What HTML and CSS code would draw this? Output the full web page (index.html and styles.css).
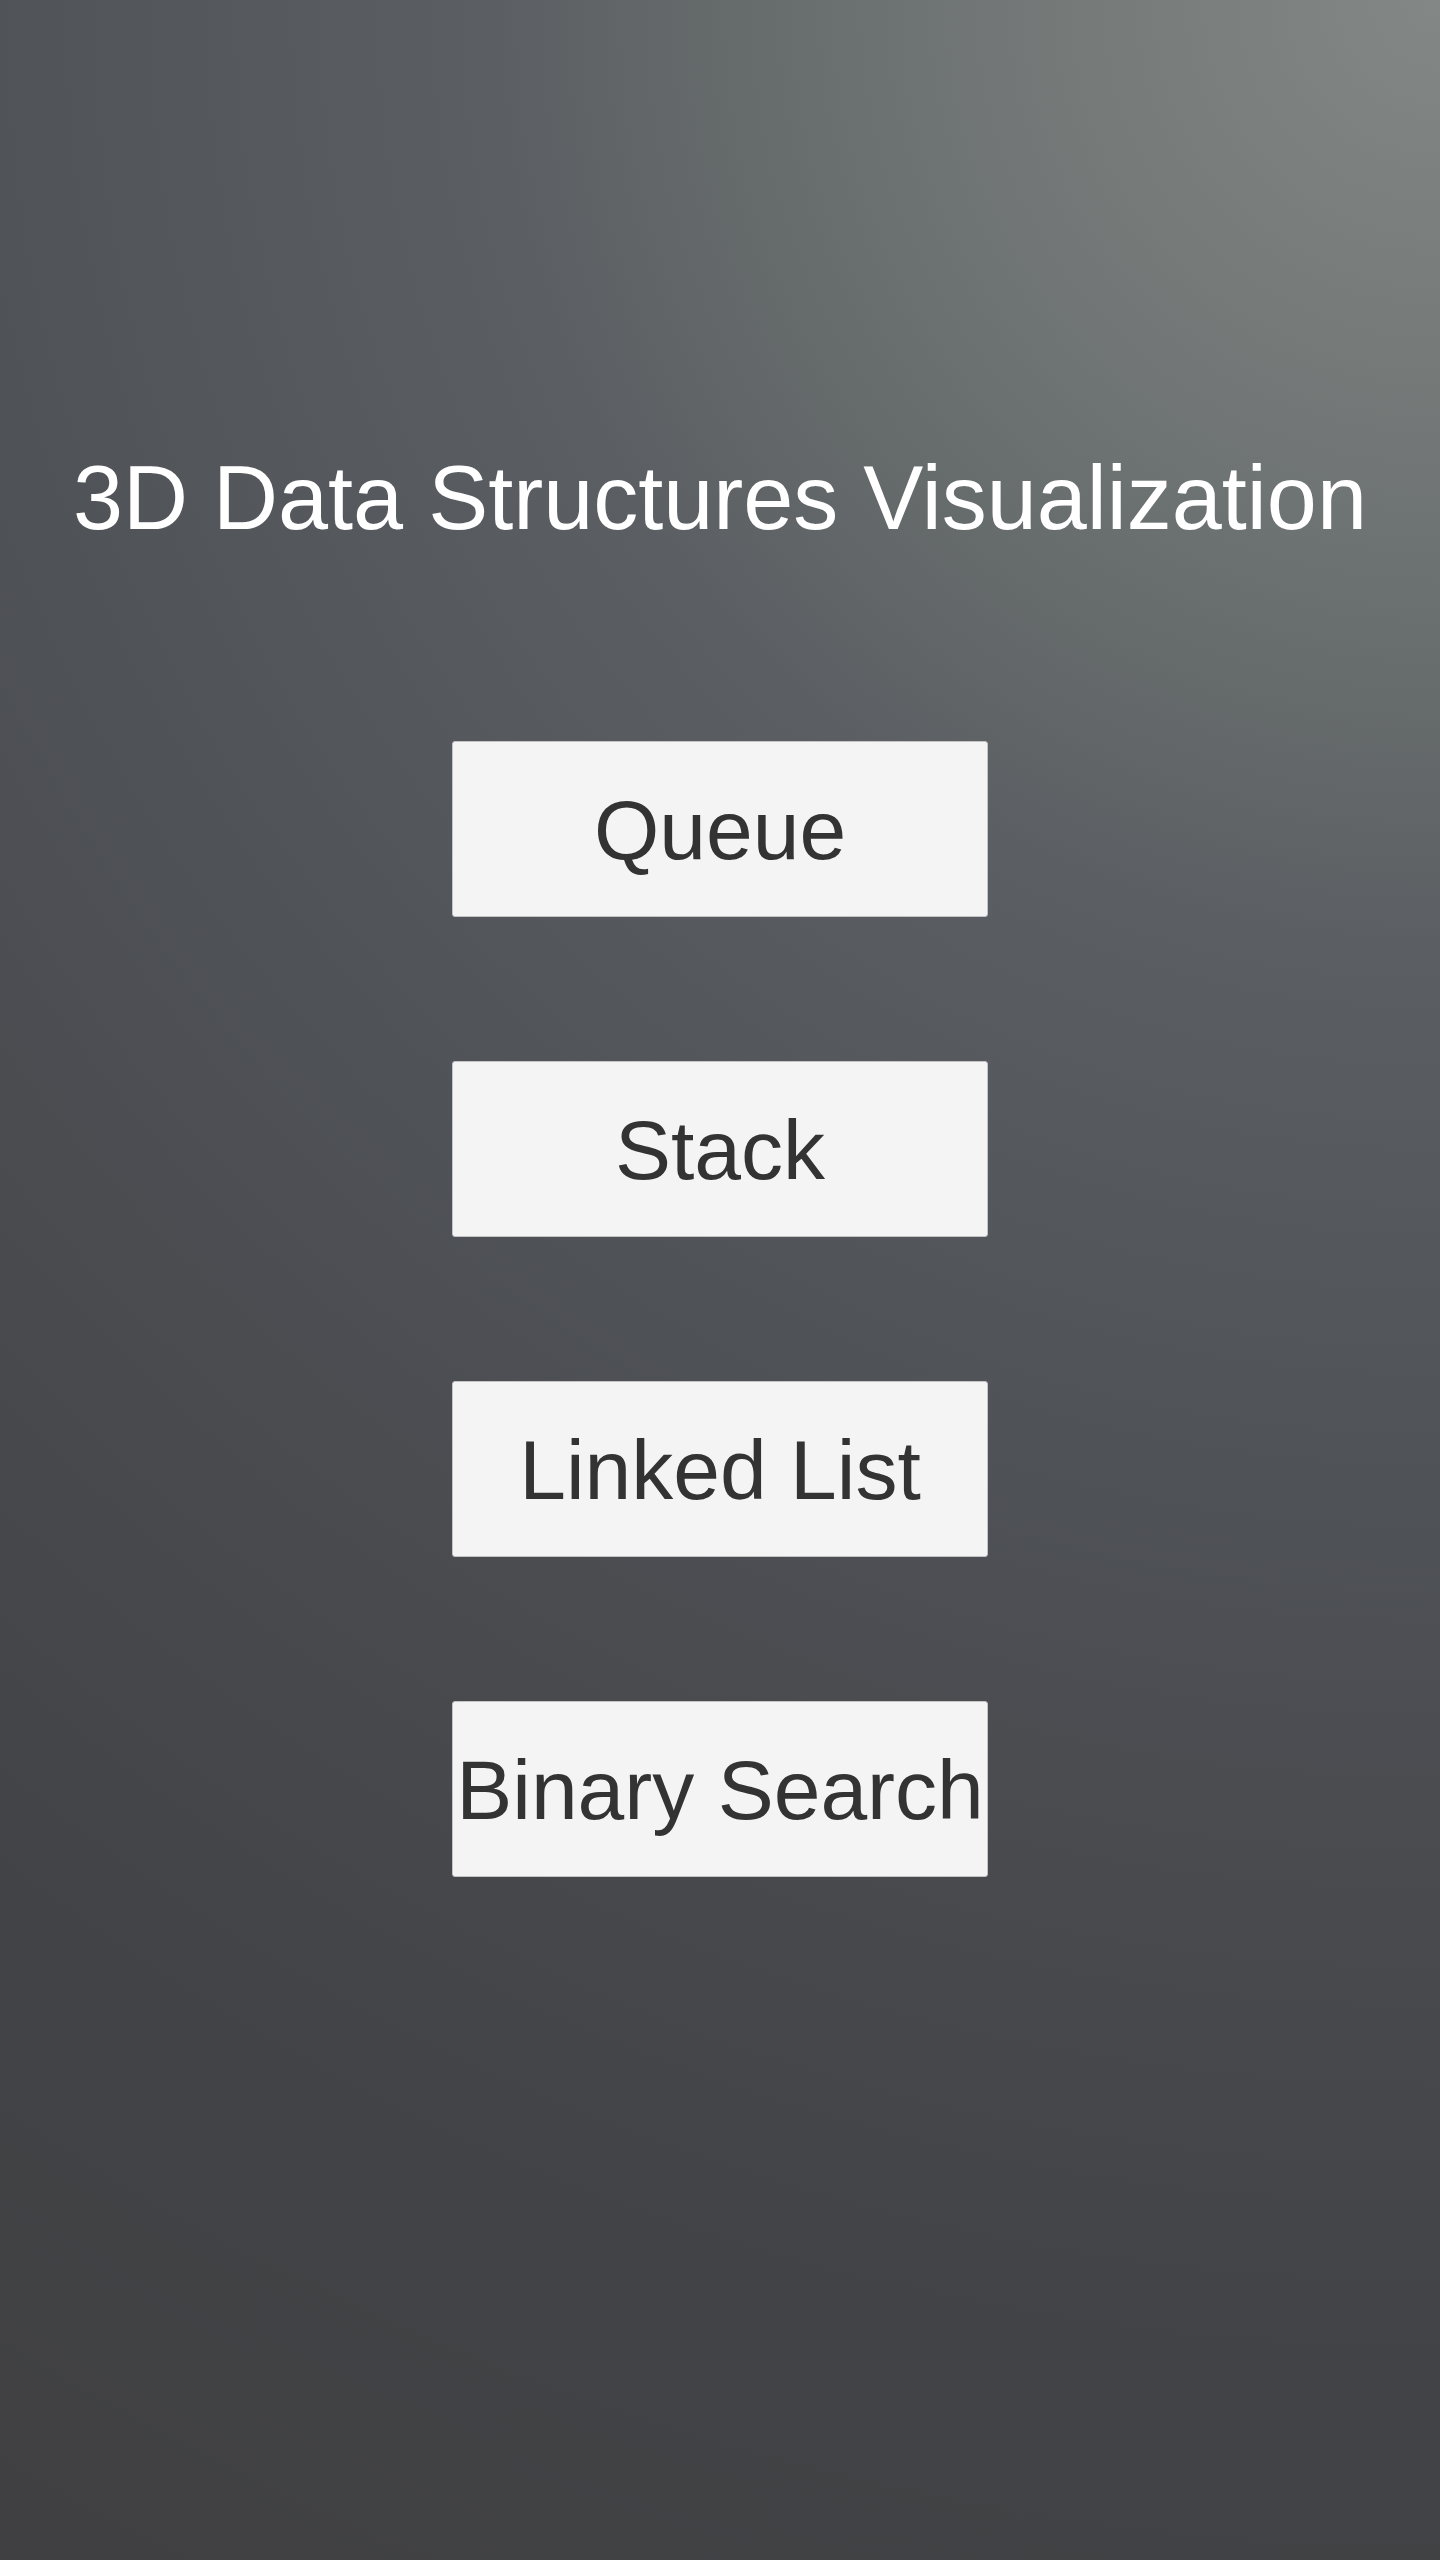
FILE: index.html
```html
<!DOCTYPE html>
<html lang="en">
<head>
<meta charset="utf-8">
<title>3D Data Structures Visualization</title>
<link rel="stylesheet" href="styles.css">
</head>
<body>
  <main class="menu">
    <h1 class="menu-title">3D Data Structures Visualization</h1>
    <nav class="menu-buttons">
      <button class="menu-btn">Queue</button>
      <button class="menu-btn">Stack</button>
      <button class="menu-btn">Linked List</button>
      <button class="menu-btn">Binary Search</button>
    </nav>
  </main>
</body>
</html>
```
FILE: styles.css
```css
html, body {
  margin: 0;
  padding: 0;
}

body {
  min-height: 2560px;
  font-family: "Liberation Sans", Arial, sans-serif;
  background: radial-gradient(circle 2940px at 100% 0%,
    #838785 0px,
    #767b7a 350px,
    #666b6c 700px,
    #5b5f63 950px,
    #515459 1400px,
    #4a4c50 1800px,
    #434447 2300px,
    #404043 2940px);
}

.menu {
  display: flex;
  flex-direction: column;
  align-items: center;
  padding-top: 448px;
}

.menu-title {
  margin: 0;
  font-size: 90px;
  font-weight: 400;
  line-height: 101px;
  color: #ffffff;
  white-space: nowrap;
}

.menu-buttons {
  display: flex;
  flex-direction: column;
  align-items: center;
  gap: 144px;
  margin-top: 192px;
}

.menu-btn {
  box-sizing: border-box;
  width: 536px;
  height: 176px;
  padding: 41px 0 40px;
  margin: 0;
  font-family: "Liberation Sans", Arial, sans-serif;
  font-size: 84px;
  line-height: 94px;
  color: #333333;
  background: #f4f4f4;
  border: 1px solid #c4c4c4;
  border-radius: 3px;
  white-space: nowrap;
  overflow: visible;
  text-align: center;
  cursor: pointer;
}
```
